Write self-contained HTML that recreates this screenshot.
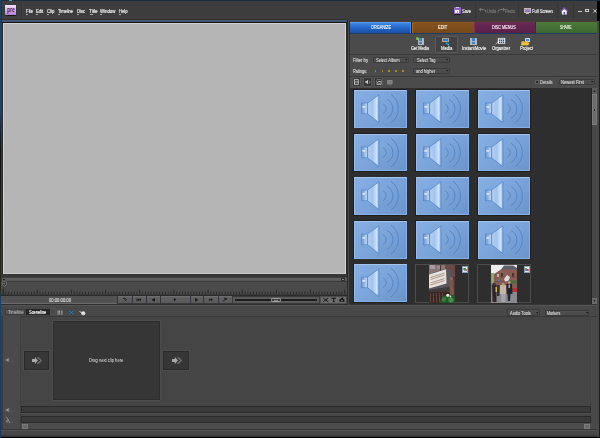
<!DOCTYPE html>
<html><head><meta charset="utf-8">
<style>
*{box-sizing:border-box}
html,body{margin:0;padding:0}
body{width:600px;height:438px;overflow:hidden;background:#000;position:relative;font-family:"Liberation Sans",sans-serif;color:#ddd}
.a{position:absolute}
.t{position:absolute;white-space:nowrap;font-size:4.8px;line-height:5px;letter-spacing:-0.2px;color:#f2f2f2;-webkit-text-stroke:0.15px currentColor}
.u{}
</style></head><body>
<!-- desktop edges -->
<div class="a" style="left:0;top:0;width:600px;height:1px;background:#1a2c44"></div>
<div class="a" style="left:0;top:0;width:1px;height:438px;background:linear-gradient(#1d4268 0,#1d4268 110px,#101410 150px,#2a2a20 290px,#1d4268 300px,#1a3a5a 438px)"></div>
<div class="a" style="left:9px;top:0;width:2.5px;height:1px;background:#2ab0d0;z-index:2"></div>
<!-- window -->
<div class="a" id="win" style="left:1px;top:1px;width:596px;height:436px;background:#3d3d3d"></div>

<!-- ===== MENU BAR ===== -->
<div class="a" style="left:5.3px;top:4.8px;width:10.9px;height:10.2px;background:linear-gradient(#f4e0fa,#d8b4ec 50%,#b07cd4);box-shadow:0 0.6px 1px #151515"></div>
<svg class="a" style="left:0;top:0" width="20" height="20"><text x="7" y="11.6" font-family="Liberation Sans" font-weight="bold" font-size="6.4" textLength="7.9" lengthAdjust="spacingAndGlyphs" fill="#3e1a70">pre</text></svg>
<div class="a" style="left:21px;top:3px;width:0.8px;height:15px;background:#353535"></div>
<div class="a" style="left:21.8px;top:3px;width:0.8px;height:15px;background:#434343"></div>

<!-- right menu tools -->
<div class="a" style="left:453.5px;top:6.5px;width:7.8px;height:7.8px;background:linear-gradient(90deg,#a070d8,#8a58c0 50%,#9a68d0);border-radius:0.8px;box-shadow:0 0.5px 0.8px #1a1a1a"></div>
<div class="a" style="left:456.4px;top:6.8px;width:2.6px;height:1.6px;background:#d8c8ec"></div>
<div class="a" style="left:455.4px;top:10.1px;width:3.8px;height:3px;background:#f6f6f2"></div>
<div class="a" style="left:457.1px;top:10.6px;width:0.4px;height:2.2px;background:#b0a0c0"></div>
<div class="a" style="left:475px;top:3px;width:1px;height:15px;background:#353535"></div>
<svg class="a" style="left:478px;top:6px" width="9" height="8" viewBox="0 0 9 8"><path d="M2 3.5 H5.5 Q8 3.5 8 6.5" stroke="#777" stroke-width="1" fill="none"/><path d="M0.8 3.5 L3 1.5 V5.5Z" fill="#777"/></svg>
<svg class="a" style="left:496.5px;top:6px" width="9" height="8" viewBox="0 0 9 8"><path d="M7 3.5 H3.5 Q1 3.5 1 6.5" stroke="#777" stroke-width="1" fill="none"/><path d="M8.2 3.5 L6 1.5 V5.5Z" fill="#777"/></svg>
<div class="a" style="left:518px;top:3px;width:1px;height:15px;background:#353535"></div>
<div class="a" style="left:523.7px;top:7.6px;width:7.3px;height:5px;background:linear-gradient(#a888d8,#9070c0);border:0.4px solid #bbb"></div>
<div class="a" style="left:525.5px;top:12.6px;width:3.6px;height:0.9px;background:#bbb"></div>
<div class="a" style="left:556.5px;top:3px;width:1px;height:15px;background:#353535"></div>
<svg class="a" style="left:560px;top:7px" width="9" height="8" viewBox="0 0 9 8"><path d="M0.6 4.3 L4.3 0.8 L8.2 4.3" stroke="#7a4fc0" stroke-width="1.1" fill="none"/><path d="M1.8 4.2 L4.3 2 L6.8 4.2 V7.5 H1.8Z" fill="#f4f4f4"/><rect x="3.6" y="5" width="1.5" height="2.5" fill="#6a3fa8"/></svg>
<div class="a" style="left:573px;top:3px;width:1px;height:15px;background:#353535"></div>
<div class="a" style="left:578px;top:10.5px;width:3.5px;height:1.3px;background:#ccc"></div>
<div class="a" style="left:585.3px;top:9px;width:3.5px;height:3px;border:0.8px solid #ccc;border-top-width:1.2px"></div>
<svg class="a" style="left:592.5px;top:8.5px" width="4" height="4" viewBox="0 0 4 4"><path d="M0.3 0.3L3.7 3.7M3.7 0.3L0.3 3.7" stroke="#ccc" stroke-width="0.9"/></svg>

<!-- ===== MONITOR PANEL ===== -->
<div class="a" style="left:1px;top:19px;width:346px;height:1px;background:#37322c"></div>
<div class="a" style="left:1px;top:20px;width:346px;height:2px;background:#3f5677"></div>
<div class="a" style="left:1px;top:22px;width:346px;height:1px;background:#111"></div>
<div class="a" style="left:1px;top:23px;width:346px;height:251px;background:#2a2a2a"></div>
<div class="a" style="left:3px;top:23px;width:343px;height:251px;background:#b5b5b5;border-left:1px solid #d0d0d0;border-top:1px solid #d0d0d0;border-right:1px solid #d4d4d4;border-bottom:1px solid #c8c8c8"></div>
<div class="a" style="left:346.5px;top:20px;width:1.1px;height:285px;background:#2a2a2a"></div><div class="a" style="left:347.6px;top:20px;width:1.2px;height:285px;background:#4a4a4a"></div>
<div class="a" style="left:1px;top:274px;width:346px;height:3px;background:#363636"></div><div class="a" style="left:1px;top:23px;width:1px;height:282px;background:#3a3a3a"></div><div class="a" style="left:1px;top:1px;width:1px;height:22px;background:#2a2e34"></div>
<!-- trim bar -->
<div class="a" style="left:2px;top:277.6px;width:345px;height:3.7px;background:linear-gradient(#626262,#555);"></div><div class="a" style="left:1px;top:281.3px;width:346px;height:1px;background:#383838"></div>
<div class="a" style="left:3px;top:278.5px;width:2px;height:1.5px;background:#1e1e1e"></div>
<div class="a" style="left:340.8px;top:277.8px;width:4.6px;height:3.4px;background:#2a2a2a;border-radius:1px"></div><div class="a" style="left:342px;top:279.2px;width:2.2px;height:0.7px;background:#888"></div>
<!-- ruler -->
<div class="a" style="left:1px;top:282.2px;width:346px;height:11.8px;background:#4a4a4a"></div>
<svg class="a" style="left:0;top:280px" width="10" height="16" viewBox="0 280 10 16"><path d="M2.4 281.6 H6.4 V284.6 L4.4 286.8 L2.4 284.6Z" fill="#3c3c3c" stroke="#8a8a8a" stroke-width="0.6"/><circle cx="4.2" cy="283.6" r="0.8" fill="#7a7a7a"/><path d="M3.6 286.5 V295" stroke="#2a2a2a" stroke-width="0.7"/></svg>
<svg class="a" style="left:0;top:289px" width="347" height="6"><rect x="2.58" y="0.6" width="0.9" height="4.6" fill="#262626"/><rect x="5.43" y="2.8" width="0.9" height="2.4" fill="#2a2a2a"/><rect x="8.28" y="2.8" width="0.9" height="2.4" fill="#2a2a2a"/><rect x="11.12" y="2.8" width="0.9" height="2.4" fill="#2a2a2a"/><rect x="13.97" y="2.8" width="0.9" height="2.4" fill="#2a2a2a"/><rect x="16.82" y="2.8" width="0.9" height="2.4" fill="#2a2a2a"/><rect x="19.67" y="2.8" width="0.9" height="2.4" fill="#2a2a2a"/><rect x="22.51" y="2.8" width="0.9" height="2.4" fill="#2a2a2a"/><rect x="25.36" y="2.8" width="0.9" height="2.4" fill="#2a2a2a"/><rect x="28.21" y="2.8" width="0.9" height="2.4" fill="#2a2a2a"/><rect x="31.06" y="2.8" width="0.9" height="2.4" fill="#2a2a2a"/><rect x="33.90" y="2.8" width="0.9" height="2.4" fill="#2a2a2a"/><rect x="36.75" y="0.6" width="0.9" height="4.6" fill="#262626"/><rect x="39.60" y="2.8" width="0.9" height="2.4" fill="#2a2a2a"/><rect x="42.45" y="2.8" width="0.9" height="2.4" fill="#2a2a2a"/><rect x="45.29" y="2.8" width="0.9" height="2.4" fill="#2a2a2a"/><rect x="48.14" y="2.8" width="0.9" height="2.4" fill="#2a2a2a"/><rect x="50.99" y="2.8" width="0.9" height="2.4" fill="#2a2a2a"/><rect x="53.84" y="2.8" width="0.9" height="2.4" fill="#2a2a2a"/><rect x="56.68" y="2.8" width="0.9" height="2.4" fill="#2a2a2a"/><rect x="59.53" y="2.8" width="0.9" height="2.4" fill="#2a2a2a"/><rect x="62.38" y="2.8" width="0.9" height="2.4" fill="#2a2a2a"/><rect x="65.23" y="2.8" width="0.9" height="2.4" fill="#2a2a2a"/><rect x="68.07" y="2.8" width="0.9" height="2.4" fill="#2a2a2a"/><rect x="70.92" y="0.6" width="0.9" height="4.6" fill="#262626"/><rect x="73.77" y="2.8" width="0.9" height="2.4" fill="#2a2a2a"/><rect x="76.61" y="2.8" width="0.9" height="2.4" fill="#2a2a2a"/><rect x="79.46" y="2.8" width="0.9" height="2.4" fill="#2a2a2a"/><rect x="82.31" y="2.8" width="0.9" height="2.4" fill="#2a2a2a"/><rect x="85.16" y="2.8" width="0.9" height="2.4" fill="#2a2a2a"/><rect x="88.01" y="2.8" width="0.9" height="2.4" fill="#2a2a2a"/><rect x="90.85" y="2.8" width="0.9" height="2.4" fill="#2a2a2a"/><rect x="93.70" y="2.8" width="0.9" height="2.4" fill="#2a2a2a"/><rect x="96.55" y="2.8" width="0.9" height="2.4" fill="#2a2a2a"/><rect x="99.39" y="2.8" width="0.9" height="2.4" fill="#2a2a2a"/><rect x="102.24" y="2.8" width="0.9" height="2.4" fill="#2a2a2a"/><rect x="105.09" y="0.6" width="0.9" height="4.6" fill="#262626"/><rect x="107.94" y="2.8" width="0.9" height="2.4" fill="#2a2a2a"/><rect x="110.78" y="2.8" width="0.9" height="2.4" fill="#2a2a2a"/><rect x="113.63" y="2.8" width="0.9" height="2.4" fill="#2a2a2a"/><rect x="116.48" y="2.8" width="0.9" height="2.4" fill="#2a2a2a"/><rect x="119.33" y="2.8" width="0.9" height="2.4" fill="#2a2a2a"/><rect x="122.18" y="2.8" width="0.9" height="2.4" fill="#2a2a2a"/><rect x="125.02" y="2.8" width="0.9" height="2.4" fill="#2a2a2a"/><rect x="127.87" y="2.8" width="0.9" height="2.4" fill="#2a2a2a"/><rect x="130.72" y="2.8" width="0.9" height="2.4" fill="#2a2a2a"/><rect x="133.56" y="2.8" width="0.9" height="2.4" fill="#2a2a2a"/><rect x="136.41" y="2.8" width="0.9" height="2.4" fill="#2a2a2a"/><rect x="139.26" y="0.6" width="0.9" height="4.6" fill="#262626"/><rect x="142.11" y="2.8" width="0.9" height="2.4" fill="#2a2a2a"/><rect x="144.96" y="2.8" width="0.9" height="2.4" fill="#2a2a2a"/><rect x="147.80" y="2.8" width="0.9" height="2.4" fill="#2a2a2a"/><rect x="150.65" y="2.8" width="0.9" height="2.4" fill="#2a2a2a"/><rect x="153.50" y="2.8" width="0.9" height="2.4" fill="#2a2a2a"/><rect x="156.35" y="2.8" width="0.9" height="2.4" fill="#2a2a2a"/><rect x="159.19" y="2.8" width="0.9" height="2.4" fill="#2a2a2a"/><rect x="162.04" y="2.8" width="0.9" height="2.4" fill="#2a2a2a"/><rect x="164.89" y="2.8" width="0.9" height="2.4" fill="#2a2a2a"/><rect x="167.74" y="2.8" width="0.9" height="2.4" fill="#2a2a2a"/><rect x="170.58" y="2.8" width="0.9" height="2.4" fill="#2a2a2a"/><rect x="173.43" y="0.6" width="0.9" height="4.6" fill="#262626"/><rect x="176.28" y="2.8" width="0.9" height="2.4" fill="#2a2a2a"/><rect x="179.12" y="2.8" width="0.9" height="2.4" fill="#2a2a2a"/><rect x="181.97" y="2.8" width="0.9" height="2.4" fill="#2a2a2a"/><rect x="184.82" y="2.8" width="0.9" height="2.4" fill="#2a2a2a"/><rect x="187.67" y="2.8" width="0.9" height="2.4" fill="#2a2a2a"/><rect x="190.52" y="2.8" width="0.9" height="2.4" fill="#2a2a2a"/><rect x="193.36" y="2.8" width="0.9" height="2.4" fill="#2a2a2a"/><rect x="196.21" y="2.8" width="0.9" height="2.4" fill="#2a2a2a"/><rect x="199.06" y="2.8" width="0.9" height="2.4" fill="#2a2a2a"/><rect x="201.91" y="2.8" width="0.9" height="2.4" fill="#2a2a2a"/><rect x="204.75" y="2.8" width="0.9" height="2.4" fill="#2a2a2a"/><rect x="207.60" y="0.6" width="0.9" height="4.6" fill="#262626"/><rect x="210.45" y="2.8" width="0.9" height="2.4" fill="#2a2a2a"/><rect x="213.30" y="2.8" width="0.9" height="2.4" fill="#2a2a2a"/><rect x="216.14" y="2.8" width="0.9" height="2.4" fill="#2a2a2a"/><rect x="218.99" y="2.8" width="0.9" height="2.4" fill="#2a2a2a"/><rect x="221.84" y="2.8" width="0.9" height="2.4" fill="#2a2a2a"/><rect x="224.69" y="2.8" width="0.9" height="2.4" fill="#2a2a2a"/><rect x="227.53" y="2.8" width="0.9" height="2.4" fill="#2a2a2a"/><rect x="230.38" y="2.8" width="0.9" height="2.4" fill="#2a2a2a"/><rect x="233.23" y="2.8" width="0.9" height="2.4" fill="#2a2a2a"/><rect x="236.08" y="2.8" width="0.9" height="2.4" fill="#2a2a2a"/><rect x="238.92" y="2.8" width="0.9" height="2.4" fill="#2a2a2a"/><rect x="241.77" y="0.6" width="0.9" height="4.6" fill="#262626"/><rect x="244.62" y="2.8" width="0.9" height="2.4" fill="#2a2a2a"/><rect x="247.47" y="2.8" width="0.9" height="2.4" fill="#2a2a2a"/><rect x="250.31" y="2.8" width="0.9" height="2.4" fill="#2a2a2a"/><rect x="253.16" y="2.8" width="0.9" height="2.4" fill="#2a2a2a"/><rect x="256.01" y="2.8" width="0.9" height="2.4" fill="#2a2a2a"/><rect x="258.86" y="2.8" width="0.9" height="2.4" fill="#2a2a2a"/><rect x="261.70" y="2.8" width="0.9" height="2.4" fill="#2a2a2a"/><rect x="264.55" y="2.8" width="0.9" height="2.4" fill="#2a2a2a"/><rect x="267.40" y="2.8" width="0.9" height="2.4" fill="#2a2a2a"/><rect x="270.25" y="2.8" width="0.9" height="2.4" fill="#2a2a2a"/><rect x="273.09" y="2.8" width="0.9" height="2.4" fill="#2a2a2a"/><rect x="275.94" y="0.6" width="0.9" height="4.6" fill="#262626"/><rect x="278.79" y="2.8" width="0.9" height="2.4" fill="#2a2a2a"/><rect x="281.64" y="2.8" width="0.9" height="2.4" fill="#2a2a2a"/><rect x="284.48" y="2.8" width="0.9" height="2.4" fill="#2a2a2a"/><rect x="287.33" y="2.8" width="0.9" height="2.4" fill="#2a2a2a"/><rect x="290.18" y="2.8" width="0.9" height="2.4" fill="#2a2a2a"/><rect x="293.03" y="2.8" width="0.9" height="2.4" fill="#2a2a2a"/><rect x="295.87" y="2.8" width="0.9" height="2.4" fill="#2a2a2a"/><rect x="298.72" y="2.8" width="0.9" height="2.4" fill="#2a2a2a"/><rect x="301.57" y="2.8" width="0.9" height="2.4" fill="#2a2a2a"/><rect x="304.42" y="2.8" width="0.9" height="2.4" fill="#2a2a2a"/><rect x="307.26" y="2.8" width="0.9" height="2.4" fill="#2a2a2a"/><rect x="310.11" y="0.6" width="0.9" height="4.6" fill="#262626"/><rect x="312.96" y="2.8" width="0.9" height="2.4" fill="#2a2a2a"/><rect x="315.81" y="2.8" width="0.9" height="2.4" fill="#2a2a2a"/><rect x="318.65" y="2.8" width="0.9" height="2.4" fill="#2a2a2a"/><rect x="321.50" y="2.8" width="0.9" height="2.4" fill="#2a2a2a"/><rect x="324.35" y="2.8" width="0.9" height="2.4" fill="#2a2a2a"/><rect x="327.19" y="2.8" width="0.9" height="2.4" fill="#2a2a2a"/><rect x="330.04" y="2.8" width="0.9" height="2.4" fill="#2a2a2a"/><rect x="332.89" y="2.8" width="0.9" height="2.4" fill="#2a2a2a"/><rect x="335.74" y="2.8" width="0.9" height="2.4" fill="#2a2a2a"/><rect x="338.59" y="2.8" width="0.9" height="2.4" fill="#2a2a2a"/><rect x="341.43" y="2.8" width="0.9" height="2.4" fill="#2a2a2a"/><rect x="344.28" y="0.6" width="0.9" height="4.6" fill="#262626"/></svg>
<div class="a" style="left:1px;top:294.5px;width:346px;height:1.2px;background:#2b2b2b"></div>
<!-- control bar -->
<div class="a" style="left:1px;top:296px;width:346px;height:8px;background:#525252;border-bottom:1px solid #6a6a6a"></div>
<div class="a" style="left:117px;top:296px;width:1px;height:8px;background:#2e2e2e"></div>
<div class="a" style="left:117.5px;top:295.5px;width:114.2px;height:8.4px;background:linear-gradient(#626262,#5a5a5a);border-top:0.5px solid #6e6e6e;border-bottom:0.7px solid #3a3a3a"></div><div class="a" style="left:117.3px;top:295.5px;width:0.8px;height:8.4px;background:#363640"></div><div class="a" style="left:131.5px;top:295.5px;width:0.8px;height:8.4px;background:#363640"></div><div class="a" style="left:145.8px;top:295.5px;width:0.8px;height:8.4px;background:#363640"></div><div class="a" style="left:160.4px;top:295.5px;width:0.8px;height:8.4px;background:#363640"></div><div class="a" style="left:189.5px;top:295.5px;width:0.8px;height:8.4px;background:#363640"></div><div class="a" style="left:203.3px;top:295.5px;width:0.8px;height:8.4px;background:#363640"></div><div class="a" style="left:217.5px;top:295.5px;width:0.8px;height:8.4px;background:#363640"></div><div class="a" style="left:231.6px;top:295.5px;width:0.8px;height:8.4px;background:#363640"></div><div class="a" style="left:232.3px;top:295.6px;width:87.5px;height:8.3px;background:#575757;border:0.5px solid #3a3a3a"></div><div class="a" style="left:234px;top:298px;width:84.1px;height:4.2px;background:#1c1c1c;border:0.5px solid #5e5e5e;border-radius:0.5px"></div><div class="a" style="left:270.6px;top:298.4px;width:10.7px;height:3.4px;background:#3a3a3a;border:0.6px solid #a0a0a0;border-radius:1.2px"></div><div class="a" style="left:274px;top:299.6px;width:4px;height:1px;background:#8a8a8a"></div><div class="a" style="left:319.7px;top:295.8px;width:27.5px;height:8.3px;background:#6c6c6c;border:0.6px solid #4a4a4a"></div><svg class="a" style="left:118px;top:295px" width="230" height="10" viewBox="118 295 230 10">
<path d="M123.2 298.3 H125 L126.4 299.8 M124.8 299.6 L126.2 301.2" stroke="#141414" stroke-width="1" fill="none"/>
<rect x="136.6" y="298.3" width="0.9" height="3" fill="#141414"/><path d="M137.5 299.8 L139.2 298.3 V301.3Z M139.2 299.8 L140.9 298.3 V301.3Z" fill="#141414"/>
<path d="M151.7 299.8 L153.9 298.2 V301.4Z" fill="#141414"/><rect x="154.1" y="298.2" width="0.9" height="3.2" fill="#141414"/>
<path d="M173.9 298 L176.4 299.6 L173.9 301.2Z" fill="#141414"/>
<rect x="195" y="298.2" width="0.9" height="3.2" fill="#141414"/><path d="M196.1 298.2 L198 299.8 L196.1 301.4Z" fill="#141414"/>
<path d="M209.3 298.3 L211 299.8 L209.3 301.3Z M211 298.3 L212.7 299.8 L211 301.3Z" fill="#141414"/>
<path d="M223.2 301.3 L225.8 298.6 M224.2 298.3 H226.2 V300" stroke="#141414" stroke-width="1" fill="none"/>
<path d="M323.2 298 L328.2 301.8 M328.2 298 L323.2 301.8" stroke="#141414" stroke-width="1"/>
<path d="M331.6 298.3 H335.9 M333.75 298.3 V301.6 M332.8 301.5 H334.7" stroke="#141414" stroke-width="1"/>
<path d="M339.4 299.2 H340.4 L341.2 297.8 H343 L343.6 299.2 H344.4 V301.8 H339.4Z" fill="#141414"/><circle cx="341.9" cy="300.4" r="0.9" fill="#6a6a6a"/>
</svg>
<div class="a" style="left:1px;top:304px;width:346px;height:1px;background:#2e2e2e"></div>

<!-- ===== RIGHT PANEL ===== -->
<div class="a" style="left:349px;top:21px;width:248px;height:284px;background:#4b4b4b"></div>
<div class="a" style="left:349.3px;top:21px;width:1px;height:284px;background:#2e2e2e"></div>
<div class="a" style="left:350px;top:21px;width:247px;height:1px;background:#4a3d33"></div>
<div class="a" style="left:350px;top:22px;width:61px;height:11px;background:linear-gradient(#3a86ea,#2262c4 55%,#1a4ea4);border-right:0.8px solid #4a90f0;border-top:0.5px solid #5a9af0"></div>
<div class="a" style="left:411px;top:22px;width:1px;height:11px;background:#1a1a1a"></div>
<div class="a" style="left:412px;top:22px;width:61.5px;height:11px;background:linear-gradient(#84531f,#774818);border-left:1px solid #b8681a;border-top:0.6px solid #8e5a26"></div>
<div class="a" style="left:473.5px;top:22px;width:61px;height:11px;background:linear-gradient(#6a2a55,#5a2048);border-left:1px solid #80305c"></div>
<div class="a" style="left:534.5px;top:22px;width:62.5px;height:11px;background:linear-gradient(#4a7a3c,#3c6830);border-left:1px solid #2a3a22"></div>
<div class="a" style="left:350px;top:33px;width:247px;height:1px;background:#1e3a66"></div>

<!-- toolbar -->
<div class="a" style="left:435px;top:35.5px;width:23px;height:17.1px;background:#424242;border:0.8px solid #5a5a5a;border-radius:1.5px"></div>
<div class="a" style="left:417.5px;top:37.8px;width:6.4px;height:7px;background:#b8b8b8;border-radius:0.4px"></div><div class="a" style="left:418.9px;top:38.3px;width:3.6px;height:2.8px;background:#2a82dc;border-radius:0.6px"></div><div class="a" style="left:418.9px;top:41.5px;width:3.6px;height:2.8px;background:#2a82dc;border-radius:0.6px"></div><div class="a" style="left:415.5px;top:36.5px;width:3.2px;height:3.2px;background:#7ccf3a;border-radius:50%"></div><div class="a" style="left:441.8px;top:37.8px;width:7px;height:4.3px;background:#2a7cd0;border:0.45px solid #b8a898"></div><svg class="a" style="left:440px;top:36px" width="12" height="12" viewBox="440 36 12 12"><path d="M447.5 41.5 Q449.5 42.5 448.6 44.3" stroke="#2a6a90" stroke-width="0.6" fill="none"/><circle cx="446.6" cy="43.4" r="0.85" fill="#30c4f0"/><circle cx="448.3" cy="44.6" r="0.85" fill="#30c4f0"/></svg><div class="a" style="left:470.3px;top:37.8px;width:6.4px;height:7px;background:#b8b8b8;border-radius:0.4px"></div><div class="a" style="left:471.7px;top:38.3px;width:3.6px;height:2.8px;background:#2a82dc;border-radius:0.6px"></div><div class="a" style="left:471.7px;top:41.5px;width:3.6px;height:2.8px;background:#2a82dc;border-radius:0.6px"></div><svg class="a" style="left:494px;top:37px" width="13" height="9" viewBox="494 37 13 9"><rect x="497.8" y="37.9" width="7.4" height="5.8" fill="#f2f2f2"/><rect x="498.6" y="38.3" width="5.8" height="0.8" fill="#9ab"/><path d="M499 39.6 h1.4 v1.5 h-1.4z M501 39.6 h1.4 v1.5 h-1.4z M503 39.6 h1.2 v1.5 h-1.2z M499 41.6 h1.4 v1.5 h-1.4z M501 41.6 h1.4 v1.5 h-1.4z M503 41.6 h1.2 v1.5 h-1.2z" fill="#1f50b0"/><path d="M495.6 44.6 Q496.5 42 499 41.8" stroke="#e0e0e0" stroke-width="0.6" fill="none"/></svg><div class="a" style="left:525.3px;top:37.9px;width:4.8px;height:3.8px;background:#3a86d8;border:0.4px solid #d0d8e0"></div><svg class="a" style="left:521px;top:39.5px" width="10" height="6" viewBox="0 0 10 6"><path d="M0.4 1 H3 L3.7 1.8 H7.2 V5.2 H0.4Z" fill="#d89a20"/><path d="M0.4 2.4 H8.4 L7.4 5.2 H0.4Z" fill="#f4c43c"/></svg>
<div class="a" style="left:350px;top:54px;width:247px;height:1px;background:#3a3a3a"></div>

<!-- filter rows -->
<div class="a" style="left:373px;top:56.5px;width:35.5px;height:6.5px;background:#4b4b4b;border:0.7px solid #3a3a3a;border-radius:1.2px;box-shadow:inset 0.5px 0.5px 0 #555"></div>
<div class="a" style="left:413px;top:56.5px;width:37px;height:6.5px;background:#4b4b4b;border:0.7px solid #3a3a3a;border-radius:1.2px;box-shadow:inset 0.5px 0.5px 0 #555"></div>
<div class="a" style="left:413px;top:67.5px;width:37px;height:6.5px;background:#4b4b4b;border:0.7px solid #3a3a3a;border-radius:1.2px;box-shadow:inset 0.5px 0.5px 0 #555"></div>
<div class="a" style="left:374.6px;top:69.8px;width:1.8px;height:1.9px;background:#b8902a;border-radius:0.6px;box-shadow:0 0 0.6px #30303a"></div><div class="a" style="left:381.6px;top:69.8px;width:1.8px;height:1.9px;background:#b8902a;border-radius:0.6px;box-shadow:0 0 0.6px #30303a"></div><div class="a" style="left:388.40000000000003px;top:69.8px;width:1.8px;height:1.9px;background:#b8902a;border-radius:0.6px;box-shadow:0 0 0.6px #30303a"></div><div class="a" style="left:395.1px;top:69.8px;width:1.8px;height:1.9px;background:#b8902a;border-radius:0.6px;box-shadow:0 0 0.6px #30303a"></div><div class="a" style="left:402.1px;top:69.8px;width:1.8px;height:1.9px;background:#b8902a;border-radius:0.6px;box-shadow:0 0 0.6px #30303a"></div>
<div class="a" style="left:350px;top:76px;width:247px;height:1px;background:#3a3a3a"></div>

<!-- view toolbar -->
<div class="a" style="left:351.9px;top:77.2px;width:8.800000000000011px;height:9.5px;background:#353535;border:0.7px solid #585858;border-radius:1px"></div><div class="a" style="left:363px;top:77.2px;width:8.899999999999977px;height:9.5px;background:#353535;border:0.7px solid #585858;border-radius:1px"></div><div class="a" style="left:374.2px;top:77.2px;width:9.199999999999989px;height:9.5px;background:#353535;border:0.7px solid #585858;border-radius:1px"></div><svg class="a" style="left:350px;top:77px" width="50" height="10" viewBox="350 77 50 10"><rect x="354.4" y="79.7" width="3.9" height="4.6" fill="none" stroke="#d8d8d8" stroke-width="0.8"/><path d="M354.4 82 H358.3" stroke="#d8d8d8" stroke-width="0.8"/><path d="M365.2 81.2 H366.2 L368 79.8 V84.2 L366.2 82.8 H365.2Z" fill="#c8c8c8"/><path d="M369.2 80.5 Q370.3 82 369.2 83.5" stroke="#aaa" stroke-width="0.6" fill="none"/><rect x="376.8" y="79.8" width="4.8" height="4.8" fill="#2a2a2a" stroke="#aaa" stroke-width="0.5"/><path d="M377.2 82.5 Q378.5 80.5 381.2 82" stroke="#e8e8e8" stroke-width="0.9" fill="none"/><path d="M377 84 H381.4" stroke="#e0e0e0" stroke-width="0.9"/><rect x="387" y="80" width="5.6" height="4.4" fill="#8a8a8a" rx="0.8"/><path d="M387 81.5 H392.6 M387 83 H392.6 M388.9 80 V84.4 M390.7 80 V84.4" stroke="#6a6a6a" stroke-width="0.35"/></svg>
<div class="a" style="left:535.2px;top:80.3px;width:3.8px;height:3.8px;background:#2a2a2a;border:0.6px solid #606060"></div>
<div class="a" style="left:558.7px;top:79px;width:36px;height:6.3px;background:#4b4b4b;border:0.7px solid #3a3a3a;border-radius:1.2px;box-shadow:inset 0.5px 0.5px 0 #555"></div>

<!-- thumbnail area -->
<div class="a" style="left:349.5px;top:88px;width:242px;height:216px;background:#2e2e2e"></div>
<svg width="0" height="0" style="position:absolute"><defs><linearGradient id="cg" x1="0" x2="1"><stop offset="0" stop-color="#b4d0f2"/><stop offset="0.45" stop-color="#a4c4ee"/><stop offset="0.8" stop-color="#cfe2f8"/><stop offset="1" stop-color="#90b6e6"/></linearGradient><linearGradient id="bg2" x1="0" x2="1"><stop offset="0" stop-color="#6e9ad4"/><stop offset="0.6" stop-color="#9cbfea"/><stop offset="0.75" stop-color="#c8dcf6"/><stop offset="1" stop-color="#8ab0e4"/></linearGradient><filter id="bl" x="0" y="0" width="1" height="1"><feGaussianBlur stdDeviation="0.35"/></filter></defs></svg><div class="a" style="left:353.2px;top:89.1px;width:54.199999999999996px;height:39.199999999999996px;background:#1e1e1e"></div>
<div class="a" style="left:353.9px;top:89.8px;width:52.8px;height:37.8px;background:linear-gradient(135deg,#86b0e4,#7aa4da 50%,#6a94ca);border-top:0.6px solid #a4c4ee;border-left:0.5px solid #98bcea;border-bottom:0.6px solid #84b0ea;border-right:0.5px solid #84b0ea"></div>
<svg class="a" style="left:353.9px;top:89.8px" width="53" height="39" viewBox="0 0 53 39">
<rect x="7.6" y="13" width="6" height="10.8" fill="url(#bg2)" stroke="#4f84c8" stroke-width="0.7"/>
<rect x="8.4" y="16.2" width="2.6" height="1.4" fill="#eef6ff"/>
<path d="M13.6 13 L24.9 4.8 V32.6 L13.6 23.8Z" fill="url(#cg)" stroke="#4f84c8" stroke-width="0.75"/>
<path d="M29.2 13.9 A5.2 5.2 0 0 1 29.2 23.4" stroke="#4f84c8" stroke-width="0.9" fill="none"/>
<path d="M33.1 9.5 A10.5 10.5 0 0 1 33.1 28.2" stroke="#4f84c8" stroke-width="0.9" fill="none"/>
<path d="M37 4.3 A17.6 17.6 0 0 1 37 33" stroke="#4f84c8" stroke-width="0.9" fill="none"/>
</svg><div class="a" style="left:415.1px;top:89.1px;width:54.199999999999996px;height:39.199999999999996px;background:#1e1e1e"></div>
<div class="a" style="left:415.8px;top:89.8px;width:52.8px;height:37.8px;background:linear-gradient(135deg,#86b0e4,#7aa4da 50%,#6a94ca);border-top:0.6px solid #a4c4ee;border-left:0.5px solid #98bcea;border-bottom:0.6px solid #84b0ea;border-right:0.5px solid #84b0ea"></div>
<svg class="a" style="left:415.8px;top:89.8px" width="53" height="39" viewBox="0 0 53 39">
<rect x="7.6" y="13" width="6" height="10.8" fill="url(#bg2)" stroke="#4f84c8" stroke-width="0.7"/>
<rect x="8.4" y="16.2" width="2.6" height="1.4" fill="#eef6ff"/>
<path d="M13.6 13 L24.9 4.8 V32.6 L13.6 23.8Z" fill="url(#cg)" stroke="#4f84c8" stroke-width="0.75"/>
<path d="M29.2 13.9 A5.2 5.2 0 0 1 29.2 23.4" stroke="#4f84c8" stroke-width="0.9" fill="none"/>
<path d="M33.1 9.5 A10.5 10.5 0 0 1 33.1 28.2" stroke="#4f84c8" stroke-width="0.9" fill="none"/>
<path d="M37 4.3 A17.6 17.6 0 0 1 37 33" stroke="#4f84c8" stroke-width="0.9" fill="none"/>
</svg><div class="a" style="left:476.8px;top:89.1px;width:54.199999999999996px;height:39.199999999999996px;background:#1e1e1e"></div>
<div class="a" style="left:477.5px;top:89.8px;width:52.8px;height:37.8px;background:linear-gradient(135deg,#86b0e4,#7aa4da 50%,#6a94ca);border-top:0.6px solid #a4c4ee;border-left:0.5px solid #98bcea;border-bottom:0.6px solid #84b0ea;border-right:0.5px solid #84b0ea"></div>
<svg class="a" style="left:477.5px;top:89.8px" width="53" height="39" viewBox="0 0 53 39">
<rect x="7.6" y="13" width="6" height="10.8" fill="url(#bg2)" stroke="#4f84c8" stroke-width="0.7"/>
<rect x="8.4" y="16.2" width="2.6" height="1.4" fill="#eef6ff"/>
<path d="M13.6 13 L24.9 4.8 V32.6 L13.6 23.8Z" fill="url(#cg)" stroke="#4f84c8" stroke-width="0.75"/>
<path d="M29.2 13.9 A5.2 5.2 0 0 1 29.2 23.4" stroke="#4f84c8" stroke-width="0.9" fill="none"/>
<path d="M33.1 9.5 A10.5 10.5 0 0 1 33.1 28.2" stroke="#4f84c8" stroke-width="0.9" fill="none"/>
<path d="M37 4.3 A17.6 17.6 0 0 1 37 33" stroke="#4f84c8" stroke-width="0.9" fill="none"/>
</svg><div class="a" style="left:353.2px;top:132.8px;width:54.199999999999996px;height:39.199999999999996px;background:#1e1e1e"></div>
<div class="a" style="left:353.9px;top:133.5px;width:52.8px;height:37.8px;background:linear-gradient(135deg,#86b0e4,#7aa4da 50%,#6a94ca);border-top:0.6px solid #a4c4ee;border-left:0.5px solid #98bcea;border-bottom:0.6px solid #84b0ea;border-right:0.5px solid #84b0ea"></div>
<svg class="a" style="left:353.9px;top:133.5px" width="53" height="39" viewBox="0 0 53 39">
<rect x="7.6" y="13" width="6" height="10.8" fill="url(#bg2)" stroke="#4f84c8" stroke-width="0.7"/>
<rect x="8.4" y="16.2" width="2.6" height="1.4" fill="#eef6ff"/>
<path d="M13.6 13 L24.9 4.8 V32.6 L13.6 23.8Z" fill="url(#cg)" stroke="#4f84c8" stroke-width="0.75"/>
<path d="M29.2 13.9 A5.2 5.2 0 0 1 29.2 23.4" stroke="#4f84c8" stroke-width="0.9" fill="none"/>
<path d="M33.1 9.5 A10.5 10.5 0 0 1 33.1 28.2" stroke="#4f84c8" stroke-width="0.9" fill="none"/>
<path d="M37 4.3 A17.6 17.6 0 0 1 37 33" stroke="#4f84c8" stroke-width="0.9" fill="none"/>
</svg><div class="a" style="left:415.1px;top:132.8px;width:54.199999999999996px;height:39.199999999999996px;background:#1e1e1e"></div>
<div class="a" style="left:415.8px;top:133.5px;width:52.8px;height:37.8px;background:linear-gradient(135deg,#86b0e4,#7aa4da 50%,#6a94ca);border-top:0.6px solid #a4c4ee;border-left:0.5px solid #98bcea;border-bottom:0.6px solid #84b0ea;border-right:0.5px solid #84b0ea"></div>
<svg class="a" style="left:415.8px;top:133.5px" width="53" height="39" viewBox="0 0 53 39">
<rect x="7.6" y="13" width="6" height="10.8" fill="url(#bg2)" stroke="#4f84c8" stroke-width="0.7"/>
<rect x="8.4" y="16.2" width="2.6" height="1.4" fill="#eef6ff"/>
<path d="M13.6 13 L24.9 4.8 V32.6 L13.6 23.8Z" fill="url(#cg)" stroke="#4f84c8" stroke-width="0.75"/>
<path d="M29.2 13.9 A5.2 5.2 0 0 1 29.2 23.4" stroke="#4f84c8" stroke-width="0.9" fill="none"/>
<path d="M33.1 9.5 A10.5 10.5 0 0 1 33.1 28.2" stroke="#4f84c8" stroke-width="0.9" fill="none"/>
<path d="M37 4.3 A17.6 17.6 0 0 1 37 33" stroke="#4f84c8" stroke-width="0.9" fill="none"/>
</svg><div class="a" style="left:476.8px;top:132.8px;width:54.199999999999996px;height:39.199999999999996px;background:#1e1e1e"></div>
<div class="a" style="left:477.5px;top:133.5px;width:52.8px;height:37.8px;background:linear-gradient(135deg,#86b0e4,#7aa4da 50%,#6a94ca);border-top:0.6px solid #a4c4ee;border-left:0.5px solid #98bcea;border-bottom:0.6px solid #84b0ea;border-right:0.5px solid #84b0ea"></div>
<svg class="a" style="left:477.5px;top:133.5px" width="53" height="39" viewBox="0 0 53 39">
<rect x="7.6" y="13" width="6" height="10.8" fill="url(#bg2)" stroke="#4f84c8" stroke-width="0.7"/>
<rect x="8.4" y="16.2" width="2.6" height="1.4" fill="#eef6ff"/>
<path d="M13.6 13 L24.9 4.8 V32.6 L13.6 23.8Z" fill="url(#cg)" stroke="#4f84c8" stroke-width="0.75"/>
<path d="M29.2 13.9 A5.2 5.2 0 0 1 29.2 23.4" stroke="#4f84c8" stroke-width="0.9" fill="none"/>
<path d="M33.1 9.5 A10.5 10.5 0 0 1 33.1 28.2" stroke="#4f84c8" stroke-width="0.9" fill="none"/>
<path d="M37 4.3 A17.6 17.6 0 0 1 37 33" stroke="#4f84c8" stroke-width="0.9" fill="none"/>
</svg><div class="a" style="left:353.2px;top:176.5px;width:54.199999999999996px;height:39.199999999999996px;background:#1e1e1e"></div>
<div class="a" style="left:353.9px;top:177.2px;width:52.8px;height:37.8px;background:linear-gradient(135deg,#86b0e4,#7aa4da 50%,#6a94ca);border-top:0.6px solid #a4c4ee;border-left:0.5px solid #98bcea;border-bottom:0.6px solid #84b0ea;border-right:0.5px solid #84b0ea"></div>
<svg class="a" style="left:353.9px;top:177.2px" width="53" height="39" viewBox="0 0 53 39">
<rect x="7.6" y="13" width="6" height="10.8" fill="url(#bg2)" stroke="#4f84c8" stroke-width="0.7"/>
<rect x="8.4" y="16.2" width="2.6" height="1.4" fill="#eef6ff"/>
<path d="M13.6 13 L24.9 4.8 V32.6 L13.6 23.8Z" fill="url(#cg)" stroke="#4f84c8" stroke-width="0.75"/>
<path d="M29.2 13.9 A5.2 5.2 0 0 1 29.2 23.4" stroke="#4f84c8" stroke-width="0.9" fill="none"/>
<path d="M33.1 9.5 A10.5 10.5 0 0 1 33.1 28.2" stroke="#4f84c8" stroke-width="0.9" fill="none"/>
<path d="M37 4.3 A17.6 17.6 0 0 1 37 33" stroke="#4f84c8" stroke-width="0.9" fill="none"/>
</svg><div class="a" style="left:415.1px;top:176.5px;width:54.199999999999996px;height:39.199999999999996px;background:#1e1e1e"></div>
<div class="a" style="left:415.8px;top:177.2px;width:52.8px;height:37.8px;background:linear-gradient(135deg,#86b0e4,#7aa4da 50%,#6a94ca);border-top:0.6px solid #a4c4ee;border-left:0.5px solid #98bcea;border-bottom:0.6px solid #84b0ea;border-right:0.5px solid #84b0ea"></div>
<svg class="a" style="left:415.8px;top:177.2px" width="53" height="39" viewBox="0 0 53 39">
<rect x="7.6" y="13" width="6" height="10.8" fill="url(#bg2)" stroke="#4f84c8" stroke-width="0.7"/>
<rect x="8.4" y="16.2" width="2.6" height="1.4" fill="#eef6ff"/>
<path d="M13.6 13 L24.9 4.8 V32.6 L13.6 23.8Z" fill="url(#cg)" stroke="#4f84c8" stroke-width="0.75"/>
<path d="M29.2 13.9 A5.2 5.2 0 0 1 29.2 23.4" stroke="#4f84c8" stroke-width="0.9" fill="none"/>
<path d="M33.1 9.5 A10.5 10.5 0 0 1 33.1 28.2" stroke="#4f84c8" stroke-width="0.9" fill="none"/>
<path d="M37 4.3 A17.6 17.6 0 0 1 37 33" stroke="#4f84c8" stroke-width="0.9" fill="none"/>
</svg><div class="a" style="left:476.8px;top:176.5px;width:54.199999999999996px;height:39.199999999999996px;background:#1e1e1e"></div>
<div class="a" style="left:477.5px;top:177.2px;width:52.8px;height:37.8px;background:linear-gradient(135deg,#86b0e4,#7aa4da 50%,#6a94ca);border-top:0.6px solid #a4c4ee;border-left:0.5px solid #98bcea;border-bottom:0.6px solid #84b0ea;border-right:0.5px solid #84b0ea"></div>
<svg class="a" style="left:477.5px;top:177.2px" width="53" height="39" viewBox="0 0 53 39">
<rect x="7.6" y="13" width="6" height="10.8" fill="url(#bg2)" stroke="#4f84c8" stroke-width="0.7"/>
<rect x="8.4" y="16.2" width="2.6" height="1.4" fill="#eef6ff"/>
<path d="M13.6 13 L24.9 4.8 V32.6 L13.6 23.8Z" fill="url(#cg)" stroke="#4f84c8" stroke-width="0.75"/>
<path d="M29.2 13.9 A5.2 5.2 0 0 1 29.2 23.4" stroke="#4f84c8" stroke-width="0.9" fill="none"/>
<path d="M33.1 9.5 A10.5 10.5 0 0 1 33.1 28.2" stroke="#4f84c8" stroke-width="0.9" fill="none"/>
<path d="M37 4.3 A17.6 17.6 0 0 1 37 33" stroke="#4f84c8" stroke-width="0.9" fill="none"/>
</svg><div class="a" style="left:353.2px;top:220.10000000000002px;width:54.199999999999996px;height:39.199999999999996px;background:#1e1e1e"></div>
<div class="a" style="left:353.9px;top:220.8px;width:52.8px;height:37.8px;background:linear-gradient(135deg,#86b0e4,#7aa4da 50%,#6a94ca);border-top:0.6px solid #a4c4ee;border-left:0.5px solid #98bcea;border-bottom:0.6px solid #84b0ea;border-right:0.5px solid #84b0ea"></div>
<svg class="a" style="left:353.9px;top:220.8px" width="53" height="39" viewBox="0 0 53 39">
<rect x="7.6" y="13" width="6" height="10.8" fill="url(#bg2)" stroke="#4f84c8" stroke-width="0.7"/>
<rect x="8.4" y="16.2" width="2.6" height="1.4" fill="#eef6ff"/>
<path d="M13.6 13 L24.9 4.8 V32.6 L13.6 23.8Z" fill="url(#cg)" stroke="#4f84c8" stroke-width="0.75"/>
<path d="M29.2 13.9 A5.2 5.2 0 0 1 29.2 23.4" stroke="#4f84c8" stroke-width="0.9" fill="none"/>
<path d="M33.1 9.5 A10.5 10.5 0 0 1 33.1 28.2" stroke="#4f84c8" stroke-width="0.9" fill="none"/>
<path d="M37 4.3 A17.6 17.6 0 0 1 37 33" stroke="#4f84c8" stroke-width="0.9" fill="none"/>
</svg><div class="a" style="left:415.1px;top:220.10000000000002px;width:54.199999999999996px;height:39.199999999999996px;background:#1e1e1e"></div>
<div class="a" style="left:415.8px;top:220.8px;width:52.8px;height:37.8px;background:linear-gradient(135deg,#86b0e4,#7aa4da 50%,#6a94ca);border-top:0.6px solid #a4c4ee;border-left:0.5px solid #98bcea;border-bottom:0.6px solid #84b0ea;border-right:0.5px solid #84b0ea"></div>
<svg class="a" style="left:415.8px;top:220.8px" width="53" height="39" viewBox="0 0 53 39">
<rect x="7.6" y="13" width="6" height="10.8" fill="url(#bg2)" stroke="#4f84c8" stroke-width="0.7"/>
<rect x="8.4" y="16.2" width="2.6" height="1.4" fill="#eef6ff"/>
<path d="M13.6 13 L24.9 4.8 V32.6 L13.6 23.8Z" fill="url(#cg)" stroke="#4f84c8" stroke-width="0.75"/>
<path d="M29.2 13.9 A5.2 5.2 0 0 1 29.2 23.4" stroke="#4f84c8" stroke-width="0.9" fill="none"/>
<path d="M33.1 9.5 A10.5 10.5 0 0 1 33.1 28.2" stroke="#4f84c8" stroke-width="0.9" fill="none"/>
<path d="M37 4.3 A17.6 17.6 0 0 1 37 33" stroke="#4f84c8" stroke-width="0.9" fill="none"/>
</svg><div class="a" style="left:476.8px;top:220.10000000000002px;width:54.199999999999996px;height:39.199999999999996px;background:#1e1e1e"></div>
<div class="a" style="left:477.5px;top:220.8px;width:52.8px;height:37.8px;background:linear-gradient(135deg,#86b0e4,#7aa4da 50%,#6a94ca);border-top:0.6px solid #a4c4ee;border-left:0.5px solid #98bcea;border-bottom:0.6px solid #84b0ea;border-right:0.5px solid #84b0ea"></div>
<svg class="a" style="left:477.5px;top:220.8px" width="53" height="39" viewBox="0 0 53 39">
<rect x="7.6" y="13" width="6" height="10.8" fill="url(#bg2)" stroke="#4f84c8" stroke-width="0.7"/>
<rect x="8.4" y="16.2" width="2.6" height="1.4" fill="#eef6ff"/>
<path d="M13.6 13 L24.9 4.8 V32.6 L13.6 23.8Z" fill="url(#cg)" stroke="#4f84c8" stroke-width="0.75"/>
<path d="M29.2 13.9 A5.2 5.2 0 0 1 29.2 23.4" stroke="#4f84c8" stroke-width="0.9" fill="none"/>
<path d="M33.1 9.5 A10.5 10.5 0 0 1 33.1 28.2" stroke="#4f84c8" stroke-width="0.9" fill="none"/>
<path d="M37 4.3 A17.6 17.6 0 0 1 37 33" stroke="#4f84c8" stroke-width="0.9" fill="none"/>
</svg><div class="a" style="left:353.2px;top:263.7px;width:54.199999999999996px;height:39.199999999999996px;background:#1e1e1e"></div>
<div class="a" style="left:353.9px;top:264.4px;width:52.8px;height:37.8px;background:linear-gradient(135deg,#86b0e4,#7aa4da 50%,#6a94ca);border-top:0.6px solid #a4c4ee;border-left:0.5px solid #98bcea;border-bottom:0.6px solid #84b0ea;border-right:0.5px solid #84b0ea"></div>
<svg class="a" style="left:353.9px;top:264.4px" width="53" height="39" viewBox="0 0 53 39">
<rect x="7.6" y="13" width="6" height="10.8" fill="url(#bg2)" stroke="#4f84c8" stroke-width="0.7"/>
<rect x="8.4" y="16.2" width="2.6" height="1.4" fill="#eef6ff"/>
<path d="M13.6 13 L24.9 4.8 V32.6 L13.6 23.8Z" fill="url(#cg)" stroke="#4f84c8" stroke-width="0.75"/>
<path d="M29.2 13.9 A5.2 5.2 0 0 1 29.2 23.4" stroke="#4f84c8" stroke-width="0.9" fill="none"/>
<path d="M33.1 9.5 A10.5 10.5 0 0 1 33.1 28.2" stroke="#4f84c8" stroke-width="0.9" fill="none"/>
<path d="M37 4.3 A17.6 17.6 0 0 1 37 33" stroke="#4f84c8" stroke-width="0.9" fill="none"/>
</svg><div class="a" style="left:415.2px;top:264.0px;width:54.0px;height:39.4px;background:#2e2e2e;border:0.7px solid #4c4c4c"></div><svg class="a" style="left:429.1px;top:265.0px" width="26" height="38" viewBox="0 0 26 38">
<g filter="url(#bl)">
<rect width="26" height="38" fill="#4e3634"/>
<rect x="0" y="0" width="16" height="10" fill="#8c7474"/>
<rect x="1" y="0" width="5" height="4" fill="#a89aa0"/><rect x="8" y="1" width="4" height="3" fill="#9a8a90"/>
<rect x="11" y="0" width="1" height="8" fill="#4a3434"/>
<rect x="16" y="0" width="10" height="12" fill="#6a4a46"/>
<path d="M0 9 L17.5 3.5 L22 5 L22.5 21 L16 22.5 L0 25Z" fill="#5a585e"/>
<path d="M0 9.5 L17 4.2 L17.5 18.5 L0 23.5Z" fill="#e8e2dc"/>
<path d="M1.5 12.5 L15.5 8 M1.5 14.5 L15.5 10 M1.5 18 L15.5 13.5 M1.5 20 L15.5 15.5" stroke="#a48c7c" stroke-width="0.9"/>
<path d="M0 25 L22.5 21.5 V24 L0 27.5Z" fill="#3c3c40"/>
<rect x="0" y="27" width="21" height="11" fill="#3a2624"/>
<path d="M1.5 28 V37.5 M4.5 28 V37.5 M7.5 28 V37.5 M10.5 28 V37.5 M13.5 28 V37.5" stroke="#5e4640" stroke-width="1.1"/>
<path d="M20.5 15 Q22.5 12.5 24.5 15 L25 31 L21 33Z" fill="#7a5848"/>
<circle cx="22.5" cy="13.5" r="1.6" fill="#8a6a5a"/>
<path d="M11 38 Q12 31 17 30 Q23 28.5 26 31 V38Z" fill="#24582a"/>
<circle cx="15" cy="34.5" r="2.3" fill="#3e7a38"/><circle cx="22" cy="35" r="2.6" fill="#4a8a44"/><circle cx="19" cy="31.5" r="1.8" fill="#2e6a30"/>
<circle cx="18.8" cy="30.2" r="1.5" fill="#eeeee8"/><circle cx="21.5" cy="31.5" r="0.9" fill="#dcdcd4"/>
</g></svg><div class="a" style="left:462.0px;top:266.0px;width:6px;height:6.5px;background:linear-gradient(#f8fbff,#d8e4f0);border:0.5px solid #8aa0b8"></div>
<div class="a" style="left:463.2px;top:267.79999999999995px;width:2.4px;height:2.4px;background:#3aa040;border-radius:50%"></div>
<div class="a" style="left:464.7px;top:268.79999999999995px;width:2.2px;height:2.2px;background:#d04050;border-radius:50%"></div>
<div class="a" style="left:463.6px;top:269.59999999999997px;width:1.8px;height:1.4px;background:#3a70d0;border-radius:50%"></div><div class="a" style="left:476.9px;top:264.0px;width:54.0px;height:39.4px;background:#2e2e2e;border:0.7px solid #4c4c4c"></div><svg class="a" style="left:490.9px;top:265.0px" width="26" height="38" viewBox="0 0 26 38">
<g filter="url(#bl)">
<rect width="26" height="38" fill="#7c7a82"/>
<rect width="26" height="12" fill="#eceeee"/>
<path d="M9 6 L13 0.5 L22 0.5 L26 3 V7Z" fill="#5e6070"/>
<path d="M3 9 L10 4.5 L26 4.5 V24 H3Z" fill="#8a5c52"/>
<path d="M4 12 H26 M4 16.5 H26" stroke="#6a4440" stroke-width="0.5"/>
<rect x="6" y="9" width="2" height="3" fill="#c8b8b0"/><rect x="10" y="8" width="2" height="3.5" fill="#4a3030"/><rect x="21" y="8" width="2" height="3.5" fill="#4a3030"/>
<path d="M13 14 L16 10 L19 12 L17.5 16 L14 16.5Z" fill="#dcdcdc"/>
<rect x="0" y="8" width="3" height="10" fill="#8aaa6a"/>
<rect x="17" y="15.5" width="9" height="3" fill="#4a6e3a"/>
<rect x="19" y="23" width="7" height="4.5" fill="#b03434"/>
<rect x="0" y="27" width="26" height="11" fill="#8a8890"/>
<path d="M1 19.5 H5.5 V37 H1.5Z" fill="#2e2826"/>
<rect x="4.5" y="22" width="1.8" height="5" fill="#d4b440"/>
<circle cx="3.2" cy="19" r="1.5" fill="#4a3a30"/>
<path d="M6 20 H8.5 V31 H6Z" fill="#2a3040"/>
<path d="M9 20.5 Q12 18.5 15 20.5 L15.5 29 H9Z" fill="#c4b8a0"/>
<path d="M10 29 H14.5 L14 37 H10.5Z" fill="#a4a4aa"/>
<circle cx="12.2" cy="19.2" r="1.4" fill="#b88c74"/>
<path d="M15.5 19 Q18 17.5 21 19 L21.5 29 H19.5 L19 36 H17 L16.5 29 H15.5Z" fill="#24262e"/>
<circle cx="18.3" cy="17.6" r="1.4" fill="#c49c84"/>
<rect x="17.6" y="19.5" width="1.2" height="3.5" fill="#c8c8d0"/>
<rect x="7" y="14.5" width="1.8" height="1.8" fill="#4a7ab8"/>
</g></svg><div class="a" style="left:523.7px;top:266.0px;width:6px;height:6.5px;background:linear-gradient(#f8fbff,#d8e4f0);border:0.5px solid #8aa0b8"></div>
<div class="a" style="left:524.9px;top:267.79999999999995px;width:2.4px;height:2.4px;background:#3aa040;border-radius:50%"></div>
<div class="a" style="left:526.4px;top:268.79999999999995px;width:2.2px;height:2.2px;background:#d04050;border-radius:50%"></div>
<div class="a" style="left:525.3px;top:269.59999999999997px;width:1.8px;height:1.4px;background:#3a70d0;border-radius:50%"></div>
<!-- scrollbar -->
<div class="a" style="left:590.5px;top:88px;width:1px;height:216px;background:#232323"></div>
<div class="a" style="left:591.5px;top:88px;width:5.8px;height:216px;background:#474747"></div>
<div class="a" style="left:591.8px;top:94px;width:5.2px;height:30.5px;background:#6c6c6c;border:0.5px solid #7a7a7a"></div>
<div class="a" style="left:593.8px;top:108.5px;width:0.8px;height:2px;background:#333"></div>
<div class="a" style="left:591.8px;top:88.2px;width:5.2px;height:5.8px;background:#5c5c5c"></div>
<svg class="a" style="left:593px;top:90px" width="3" height="2"><path d="M0.3 1.8 H2.7 L1.5 0.3Z" fill="#111"/></svg>
<div class="a" style="left:591.8px;top:297.8px;width:5.2px;height:6.2px;background:#6a6a6a"></div>
<svg class="a" style="left:593px;top:300px" width="3" height="2"><path d="M0.3 0.2 H2.7 L1.5 1.7Z" fill="#111"/></svg>
<div class="a" style="left:349px;top:304px;width:248px;height:1px;background:#343434"></div>

<!-- ===== TIMELINE PANEL ===== -->
<div class="a" style="left:1px;top:305px;width:596px;height:11px;background:#484848;border-top:0.8px solid #555"></div><div class="a" style="left:50.2px;top:308.2px;width:6.2px;height:7.3px;background:#4a4a4a;border:0.5px solid #525252"></div>
<div class="a" style="left:4.5px;top:308.5px;width:20px;height:6.5px;background:#575757;border:0.6px solid #3c3c3c"></div>
<div class="a" style="left:26px;top:308.5px;width:24px;height:6.5px;background:#262626"></div>
<div class="a" style="left:57.1px;top:309.9px;width:6px;height:4.9px;background:linear-gradient(#9a9a9a,#7a7a7a);border:0.4px solid #6a6a6a"></div><div class="a" style="left:59.9px;top:310.3px;width:0.5px;height:4.1px;background:#5a5a5a"></div><svg class="a" style="left:67px;top:309px" width="9" height="7" viewBox="0 0 9 7"><path d="M1.5 1.2 L7.3 5.8 M7.3 1.2 L1.5 5.8" stroke="#2a3e50" stroke-width="1.6"/><path d="M1.8 1.4 L7 5.6 M7 1.4 L1.8 5.6" stroke="#3d8ac4" stroke-width="0.8"/></svg><svg class="a" style="left:78px;top:309.5px" width="8" height="6" viewBox="0 0 8 6"><path d="M0.5 0.8 L4 2 L5.5 4.5 L3.5 3.5Z" fill="#bbb"/><circle cx="5.3" cy="3.3" r="2.1" fill="#d0d0d0"/><circle cx="5" cy="2.8" r="1" fill="#eee"/></svg>
<div class="a" style="left:507.3px;top:309.3px;width:32.4px;height:6.7px;background:#4b4b4b;border:0.7px solid #3a3a3a;border-radius:1.2px;box-shadow:inset 0.5px 0.5px 0 #555"></div>
<div class="a" style="left:544.8px;top:309.5px;width:44.6px;height:6.6px;background:#4b4b4b;border:0.7px solid #3a3a3a;border-radius:1.2px;box-shadow:inset 0.5px 0.5px 0 #555"></div>
<div class="a" style="left:21px;top:316px;width:576px;height:1.6px;background:#393939"></div>
<div class="a" style="left:1px;top:317px;width:596px;height:113px;background:#454545"></div><div class="a" style="left:590.4px;top:317px;width:7px;height:113px;background:#494949;border-left:0.6px solid #424242"></div><div class="a" style="left:597px;top:21px;width:1.6px;height:416px;background:#484848"></div><div class="a" style="left:598.6px;top:21px;width:1.4px;height:416px;background:#1e1e1e"></div>
<div class="a" style="left:1px;top:316px;width:2px;height:114px;background:#3c3c3c"></div><div class="a" style="left:3px;top:316px;width:18px;height:114px;background:#4a4a4a;border-right:0.7px solid #404040"></div>
<!-- sceneline boxes -->
<div class="a" style="left:52.6px;top:321px;width:107.8px;height:78.6px;background:#363636;border:0.7px solid #2c2c2c;box-shadow:0 0 0 0.8px #505050"></div>
<div class="a" style="left:23.6px;top:350.9px;width:25.8px;height:19.2px;background:#363636;border:0.7px solid #2a2a2a;box-shadow:0 0 0 0.8px #505050"></div>
<div class="a" style="left:163.2px;top:350.9px;width:26px;height:19.2px;background:#363636;border:0.7px solid #2a2a2a;box-shadow:0 0 0 0.8px #505050"></div>
<svg class="a" style="left:30.0px;top:355px" width="13" height="11" viewBox="30 355 13 11"><rect x="32" y="359" width="3.2" height="3" fill="#a8a8a8"/><path d="M34.9 356.9 L37.9 360.5 L34.9 364Z" fill="#a8a8a8"/><path d="M37.3 357.2 L40.5 360.5 L37.3 363.8 M38.6 357.2 L41.6 360.5 L38.6 363.8" stroke="#9a9a9a" stroke-width="0.6" fill="none"/></svg><svg class="a" style="left:169.8px;top:355px" width="13" height="11" viewBox="30 355 13 11"><rect x="32" y="359" width="3.2" height="3" fill="#a8a8a8"/><path d="M34.9 356.9 L37.9 360.5 L34.9 364Z" fill="#a8a8a8"/><path d="M37.3 357.2 L40.5 360.5 L37.3 363.8 M38.6 357.2 L41.6 360.5 L38.6 363.8" stroke="#9a9a9a" stroke-width="0.6" fill="none"/></svg>
<!-- tracks -->
<div class="a" style="left:21px;top:405.8px;width:570px;height:6.8px;background:#3a3a3a;border:0.7px solid #2a2a2a;box-shadow:0 0.9px 0 #525252"></div>
<div class="a" style="left:21px;top:415.8px;width:570px;height:6.8px;background:#3a3a3a;border:0.7px solid #2a2a2a;box-shadow:0 0.9px 0 #525252"></div>
<div class="a" style="left:21px;top:424.3px;width:570px;height:4.8px;background:#4c4c4c"></div>
<div class="a" style="left:21.7px;top:424.4px;width:6.1px;height:4.8px;background:#6a6a6a;border:0.5px solid #7a7a7a"></div>
<div class="a" style="left:584px;top:424.4px;width:6.3px;height:4.8px;background:#6a6a6a;border:0.5px solid #7a7a7a"></div>
<div class="a" style="left:1px;top:429.2px;width:596px;height:1px;background:#353535"></div>
<div class="a" style="left:1px;top:430.2px;width:596px;height:5.3px;background:#474747;border-top:0.6px solid #555"></div><div class="a" style="left:1px;top:435.5px;width:596px;height:1.2px;background:#333"></div>
<svg class="a" style="left:5px;top:357.2px" width="10" height="7" viewBox="0 0 10 7"><path d="M0.6 2.4 H1.8 L3.6 0.8 V5.2 L1.8 3.6 H0.6Z" fill="#a0a0a0"/><path d="M4.6 1.6 Q5.4 3 4.6 4.4" stroke="#6a6a6a" stroke-width="0.5" fill="none"/><path d="M6.2 4.8 H8" stroke="#6a6a6a" stroke-width="0.6"/></svg><svg class="a" style="left:5px;top:407px" width="10" height="7" viewBox="0 0 10 7"><path d="M0.6 2.4 H1.8 L3.6 0.8 V5.2 L1.8 3.6 H0.6Z" fill="#a0a0a0"/><path d="M4.6 1.6 Q5.4 3 4.6 4.4" stroke="#6a6a6a" stroke-width="0.5" fill="none"/><path d="M6.2 4.8 H8" stroke="#6a6a6a" stroke-width="0.6"/></svg><svg class="a" style="left:5px;top:415.5px" width="10" height="8" viewBox="0 0 10 8"><path d="M1 0.8 L3.2 3.4 L1.5 5 M3.2 3.4 L4.5 6.8" stroke="#a0a0a0" stroke-width="0.8" fill="none"/><circle cx="2" cy="5.6" r="0.9" fill="#909090"/><path d="M6.2 6.5 H8" stroke="#6a6a6a" stroke-width="0.6"/></svg>
<svg class="a" style="left:404.5px;top:59px" width="3" height="2"><path d="M0 0 H2.4 L1.2 1.5Z" fill="#1a1a1a"/></svg><svg class="a" style="left:446px;top:59px" width="3" height="2"><path d="M0 0 H2.4 L1.2 1.5Z" fill="#1a1a1a"/></svg><svg class="a" style="left:446px;top:70px" width="3" height="2"><path d="M0 0 H2.4 L1.2 1.5Z" fill="#1a1a1a"/></svg><svg class="a" style="left:590.5px;top:81.3px" width="3" height="2"><path d="M0 0 H2.4 L1.2 1.5Z" fill="#1a1a1a"/></svg><svg class="a" style="left:535.5px;top:312.3px" width="3" height="2"><path d="M0 0 H2.4 L1.2 1.5Z" fill="#1a1a1a"/></svg><svg class="a" style="left:585.5px;top:312.3px" width="3" height="2"><path d="M0 0 H2.4 L1.2 1.5Z" fill="#1a1a1a"/></svg>
<div class="t" style="left:25.50px;top:10.00px;font-size:4.8px;line-height:4.8px;letter-spacing:0;color:#f4f4f4;transform:scaleX(0.905);transform-origin:0 0;"><span class="u">F</span>ile</div><div class="a" style="left:25.50px;top:13.7px;width:2.4px;height:0.6px;background:#a8a8a8"></div><div class="t" style="left:36.00px;top:10.00px;font-size:4.8px;line-height:4.8px;letter-spacing:0;color:#f4f4f4;transform:scaleX(0.869);transform-origin:0 0;"><span class="u">E</span>dit</div><div class="a" style="left:36.00px;top:13.7px;width:2.4px;height:0.6px;background:#a8a8a8"></div><div class="t" style="left:47.00px;top:10.00px;font-size:4.8px;line-height:4.8px;letter-spacing:0;color:#f4f4f4;transform:scaleX(0.907);transform-origin:0 0;"><span class="u">C</span>lip</div><div class="a" style="left:47.00px;top:13.7px;width:2.4px;height:0.6px;background:#a8a8a8"></div><div class="t" style="left:58.00px;top:10.00px;font-size:4.8px;line-height:4.8px;letter-spacing:0;color:#f4f4f4;transform:scaleX(0.836);transform-origin:0 0;"><span class="u">T</span>imeline</div><div class="a" style="left:58.00px;top:13.7px;width:2.4px;height:0.6px;background:#a8a8a8"></div><div class="t" style="left:77.00px;top:10.00px;font-size:4.8px;line-height:4.8px;letter-spacing:0;color:#f4f4f4;transform:scaleX(0.879);transform-origin:0 0;"><span class="u">D</span>isc</div><div class="a" style="left:77.00px;top:13.7px;width:2.4px;height:0.6px;background:#a8a8a8"></div><div class="t" style="left:88.70px;top:10.00px;font-size:4.8px;line-height:4.8px;letter-spacing:0;color:#f4f4f4;transform:scaleX(0.979);transform-origin:0 0;">T<span class="u">i</span>tle</div><div class="a" style="left:90.44px;top:13.7px;width:2.4px;height:0.6px;background:#a8a8a8"></div><div class="t" style="left:100.00px;top:10.00px;font-size:4.8px;line-height:4.8px;letter-spacing:0;color:#f4f4f4;transform:scaleX(0.897);transform-origin:0 0;"><span class="u">W</span>indow</div><div class="a" style="left:100.00px;top:13.7px;width:2.4px;height:0.6px;background:#a8a8a8"></div><div class="t" style="left:119.00px;top:10.00px;font-size:4.8px;line-height:4.8px;letter-spacing:0;color:#f4f4f4;transform:scaleX(0.851);transform-origin:0 0;"><span class="u">H</span>elp</div><div class="a" style="left:119.00px;top:13.7px;width:2.4px;height:0.6px;background:#a8a8a8"></div><div class="t" style="left:462.00px;top:10.00px;font-size:4.8px;line-height:4.8px;letter-spacing:0;color:#f2f2f2;transform:scaleX(0.823);transform-origin:0 0;">Save</div><div class="t" style="left:486.70px;top:10.00px;font-size:4.8px;line-height:4.8px;letter-spacing:0;color:#7a7a7a;transform:scaleX(0.793);transform-origin:0 0;">Undo</div><div class="t" style="left:505.30px;top:10.00px;font-size:4.8px;line-height:4.8px;letter-spacing:0;color:#7a7a7a;transform:scaleX(0.846);transform-origin:0 0;">Redo</div><div class="t" style="left:532.00px;top:10.00px;font-size:4.8px;line-height:4.8px;letter-spacing:0;color:#f2f2f2;transform:scaleX(0.853);transform-origin:0 0;">Full Screen</div><div class="t" style="left:370.80px;top:26.00px;font-size:4.8px;line-height:4.8px;letter-spacing:0;color:#f4f8ff;transform:scaleX(0.798);transform-origin:0 0;">ORGANIZE</div><div class="t" style="left:437.50px;top:26.00px;font-size:4.8px;line-height:4.8px;letter-spacing:0;color:#fff4e8;transform:scaleX(0.841);transform-origin:0 0;">EDIT</div><div class="t" style="left:492.30px;top:26.00px;font-size:4.8px;line-height:4.8px;letter-spacing:0;color:#fbeaf6;transform:scaleX(0.787);transform-origin:0 0;">DISC MENUS</div><div class="t" style="left:560.00px;top:26.00px;font-size:4.8px;line-height:4.8px;letter-spacing:0;color:#eef8e8;transform:scaleX(0.690);transform-origin:0 0;">SHARE</div><div class="t" style="left:411.30px;top:47.00px;font-size:4.8px;line-height:4.8px;letter-spacing:0;color:#f2f2f2;transform:scaleX(0.813);transform-origin:0 0;">Get Media</div><div class="t" style="left:440.70px;top:47.00px;font-size:4.8px;line-height:4.8px;letter-spacing:0;color:#f2f2f2;transform:scaleX(0.864);transform-origin:0 0;">Media</div><div class="t" style="left:461.70px;top:47.00px;font-size:4.8px;line-height:4.8px;letter-spacing:0;color:#f2f2f2;transform:scaleX(0.882);transform-origin:0 0;">InstantMovie</div><div class="t" style="left:491.70px;top:47.00px;font-size:4.8px;line-height:4.8px;letter-spacing:0;color:#f2f2f2;transform:scaleX(0.855);transform-origin:0 0;">Organizer</div><div class="t" style="left:520.00px;top:47.00px;font-size:4.8px;line-height:4.8px;letter-spacing:0;color:#f2f2f2;transform:scaleX(0.870);transform-origin:0 0;">Project</div><div class="t" style="left:353.30px;top:59.00px;font-size:4.8px;line-height:4.8px;letter-spacing:0;color:#d8d8d8;transform:scaleX(0.879);transform-origin:0 0;">Filter by</div><div class="t" style="left:353.30px;top:70.00px;font-size:4.8px;line-height:4.8px;letter-spacing:0;color:#d8d8d8;transform:scaleX(0.801);transform-origin:0 0;">Ratings:</div><div class="t" style="left:375.70px;top:59.00px;font-size:4.8px;line-height:4.8px;letter-spacing:0;color:#e0e0e0;transform:scaleX(0.843);transform-origin:0 0;-webkit-text-stroke:0.05px currentColor">Select Album</div><div class="t" style="left:416.80px;top:59.00px;font-size:4.8px;line-height:4.8px;letter-spacing:0;color:#e0e0e0;transform:scaleX(0.825);transform-origin:0 0;-webkit-text-stroke:0.05px currentColor">Select Tag</div><div class="t" style="left:416.00px;top:70.00px;font-size:4.8px;line-height:4.8px;letter-spacing:0;color:#e0e0e0;transform:scaleX(0.842);transform-origin:0 0;-webkit-text-stroke:0.05px currentColor">and higher</div><div class="t" style="left:540.30px;top:81.00px;font-size:4.8px;line-height:4.8px;letter-spacing:0;color:#c8c8c8;transform:scaleX(0.866);transform-origin:0 0;">Details</div><div class="t" style="left:561.40px;top:81.00px;font-size:4.8px;line-height:4.8px;letter-spacing:0;color:#e0e0e0;transform:scaleX(0.859);transform-origin:0 0;-webkit-text-stroke:0.05px currentColor">Newest First</div><div class="t" style="left:7.50px;top:311.00px;font-size:4.8px;line-height:4.8px;letter-spacing:0;color:#bdbdbd;transform:scaleX(0.874);transform-origin:0 0;-webkit-text-stroke:0">Timeline</div><div class="t" style="left:29.20px;top:311.00px;font-size:4.8px;line-height:4.8px;letter-spacing:0;color:#ffffff;transform:scaleX(0.821);transform-origin:0 0;">Sceneline</div><div class="t" style="left:510.00px;top:312.00px;font-size:4.8px;line-height:4.8px;letter-spacing:0;color:#e0e0e0;transform:scaleX(0.841);transform-origin:0 0;-webkit-text-stroke:0.05px currentColor">Audio Tools</div><div class="t" style="left:546.70px;top:312.00px;font-size:4.8px;line-height:4.8px;letter-spacing:0;color:#e0e0e0;transform:scaleX(0.768);transform-origin:0 0;-webkit-text-stroke:0.05px currentColor">Markers</div><div class="t" style="left:49.00px;top:299.00px;font-size:4.8px;line-height:4.8px;letter-spacing:0;color:#f0f0f0;transform:scaleX(0.868);transform-origin:0 0;-webkit-text-stroke:0.05px currentColor">00:00:00:00</div><div class="t" style="left:89.30px;top:359.00px;font-size:4.8px;line-height:4.8px;letter-spacing:0;color:#d0d0d0;transform:scaleX(0.852);transform-origin:0 0;-webkit-text-stroke:0.05px currentColor">Drag next clip here</div>
</body></html>
